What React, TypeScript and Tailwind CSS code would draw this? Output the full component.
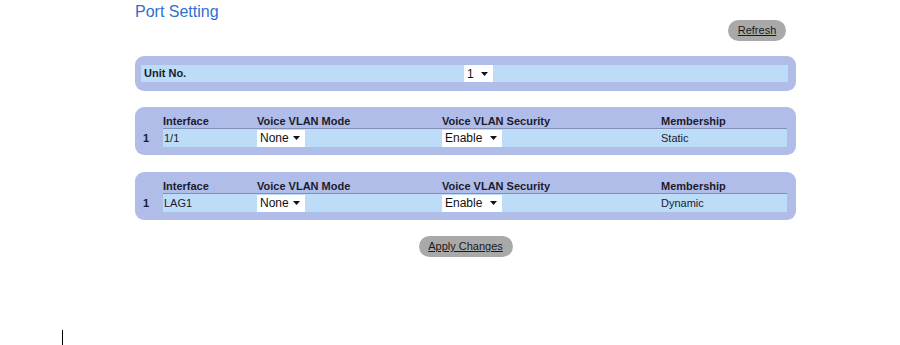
import { ReactNode } from 'react'

function Select({ value, width }: { value: string; width: string }) {
  return (
    <div className={`${width} h-[17px] bg-white flex items-center justify-between pl-[3px] pr-[5px] text-[12px] font-normal text-[#111]`}>
      <span>{value}</span>
      <svg width="7" height="4" viewBox="0 0 7 4"><path d="M0 0h7L3.5 4z" fill="#111" /></svg>
    </div>
  )
}

function PillButton({ children, width }: { children: ReactNode; width: string }) {
  return (
    <button className={`${width} h-[21px] rounded-full bg-[#a9a9a9] text-[11px] text-[#1a1a1a] underline underline-offset-1 flex items-center justify-center`}>
      {children}
    </button>
  )
}

function VlanPanel({ iface, membership }: { iface: string; membership: string }) {
  return (
    <div className="rounded-[9px] bg-[#b0bde8] pt-[8px] pb-[8px] pl-[6px] pr-[9px]">
      <div className="flex text-[11px] font-bold text-[#1b1b2e] leading-[13px]">
        <div className="w-[22px]" />
        <div className="flex-1 flex border-b border-[#7f8fb8]">
          <div className="w-[94px]">Interface</div>
          <div className="w-[185px]">Voice VLAN Mode</div>
          <div className="w-[219px]">Voice VLAN Security</div>
          <div>Membership</div>
        </div>
      </div>
      <div className="flex text-[11px] text-[#1b1b2e] h-[18px] items-center">
        <div className="w-[22px] pl-[2px] font-bold">1</div>
        <div className="flex-1 flex items-center h-full bg-[#bcdcf8]">
          <div className="w-[94px] pl-[1px]">{iface}</div>
          <div className="w-[185px]"><Select value="None" width="w-[48px]" /></div>
          <div className="w-[219px]"><Select value="Enable" width="w-[60px]" /></div>
          <div>{membership}</div>
        </div>
      </div>
    </div>
  )
}

export default function App() {
  return (
    <div className="w-[900px] h-[345px] bg-white font-['Liberation_Sans',Arial,sans-serif] overflow-hidden">
      <div className="ml-[135px] w-[661px]">
        <h1 className="pt-[2px] text-[16px] leading-[19px] text-[#2f6fd0]">Port Setting</h1>
        <div className="flex justify-end pr-[10px] mt-[-1px]">
          <PillButton width="w-[58px]">Refresh</PillButton>
        </div>

        <div className="mt-[15px] rounded-[9px] bg-[#b0bde8] py-[9px] pl-[6px] pr-[8px]">
          <div className="h-[17px] bg-[#bcdcf8] flex items-center pl-[3px] text-[11px] font-bold text-[#1b1b2e]">
            <div className="w-[320px]">Unit No.</div>
            <Select value="1" width="w-[29px]" />
          </div>
        </div>

        <div className="mt-[16px]">
          <VlanPanel iface="1/1" membership="Static" />
        </div>
        <div className="mt-[17px]">
          <VlanPanel iface="LAG1" membership="Dynamic" />
        </div>

        <div className="flex justify-center mt-[16px]">
          <PillButton width="w-[94px]">Apply Changes</PillButton>
        </div>
      </div>
      <div className="ml-[62px] mt-[73px] w-px h-[16px] bg-black" />
    </div>
  )
}
